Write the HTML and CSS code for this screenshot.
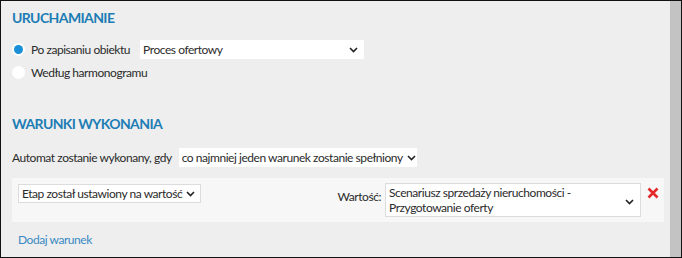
FILE: index.html
```html
<!DOCTYPE html>
<html>
    <head>
        <title>Automat</title>
        <meta charset="UTF-8">
        <link rel="stylesheet" href="styles.css">
    </head>
    <body>
        <div class="frame">
            <div class="content">
                <h2 class="section-title">URUCHAMIANIE</h2>

                <div class="radio-row">
                    <span class="radio checked"></span>
                    <span class="radio-label">Po zapisaniu obiektu</span>
                    <div class="dropdown trigger-select">
                        <span class="dropdown-text">Proces ofertowy</span>
                        <svg class="chevron" width="9" height="6" viewBox="0 0 9 6"><path d="M1 1 L4.5 4.5 L8 1" fill="none" stroke="#222" stroke-width="1.6"/></svg>
                    </div>
                </div>
                <div class="radio-row">
                    <span class="radio"></span>
                    <span class="radio-label">Według harmonogramu</span>
                </div>

                <h2 class="section-title second">WARUNKI WYKONANIA</h2>

                <div class="mode-row">
                    <span class="mode-label">Automat zostanie wykonany, gdy</span>
                    <div class="dropdown mode-select">
                        <span class="dropdown-text">co najmniej jeden warunek zostanie spełniony</span>
                        <svg class="chevron" width="9" height="6" viewBox="0 0 9 6"><path d="M1 1 L4.5 4.5 L8 1" fill="none" stroke="#222" stroke-width="1.6"/></svg>
                    </div>
                </div>

                <div class="condition">
                    <div class="dropdown bordered field-select">
                        <span class="dropdown-text">Etap został ustawiony na wartość</span>
                        <svg class="chevron" width="9" height="6" viewBox="0 0 9 6"><path d="M1 1 L4.5 4.5 L8 1" fill="none" stroke="#222" stroke-width="1.6"/></svg>
                    </div>
                    <span class="value-label">Wartość:</span>
                    <div class="dropdown bordered value-select">
                        <span class="dropdown-text">Scenariusz sprzedaży nieruchomości - Przygotowanie oferty</span>
                        <svg class="chevron" width="9" height="6" viewBox="0 0 9 6"><path d="M1 1 L4.5 4.5 L8 1" fill="none" stroke="#222" stroke-width="1.6"/></svg>
                    </div>
                    <svg class="remove" width="12" height="12" viewBox="0 0 12 12"><path d="M1.5 1.5 L10.5 10.5 M10.5 1.5 L1.5 10.5" stroke="#e5292b" stroke-width="2.6"/></svg>
                </div>

                <a class="add-link" href="#">Dodaj warunek</a>
            </div>
            <div class="scrollbar"></div>
        </div>
    </body>
</html>
```

FILE: styles.css
```css
body {
    margin: 0;
    font-family: Lato, "Liberation Sans", sans-serif;
    font-size: 12px;
    letter-spacing: -0.45px;
    line-height: 16px;
    color: #2b2b2b;
}
.frame {
    width: 680px;
    height: 256px;
    border: 1px solid #111;
    display: flex;
    background: #eeeeee;
}
.content {
    flex: 1;
    padding: 9px 0 0 11px;
}
.scrollbar {
    width: 11px;
    background: #c3c3c3;
}
.section-title {
    margin: 0;
    font-size: 14px;
    letter-spacing: -0.6px;
    font-weight: bold;
    color: #1c7db5;
    line-height: 16px;
}
.section-title.second {
    margin-top: 32px;
}
.radio-row {
    display: flex;
    align-items: center;
    height: 23px;
}
.radio-row:first-of-type {
    margin-top: 12px;
}
.radio {
    width: 13px;
    height: 13px;
    border-radius: 50%;
    background: white;
    margin: 0 6px 0 0;
    display: flex;
    align-items: center;
    justify-content: center;
}
.radio.checked::after {
    content: "";
    width: 9px;
    height: 9px;
    border-radius: 50%;
    background: #1a8fd8;
}
.radio-label {
    margin-right: 10px;
}
.dropdown {
    display: flex;
    align-items: center;
    background: white;
    box-sizing: border-box;
    padding: 0 6px 0 3px;
}
.dropdown-text {
    flex: 1;
    white-space: nowrap;
}
.chevron {
    flex: none;
    margin-left: 4px;
}
.trigger-select {
    width: 224px;
    height: 19px;
}
.mode-row {
    display: flex;
    align-items: center;
    margin-top: 16px;
}
.mode-label {
    margin-right: 7px;
}
.mode-select {
    width: 238px;
    height: 19px;
}
.bordered {
    border: 1px solid #dcdcdc;
}
.condition {
    display: flex;
    align-items: flex-start;
    background: #f7f7f7;
    width: 652px;
    height: 44px;
    box-sizing: border-box;
    margin-top: 11px;
    padding: 5px 0 0 6px;
}
.field-select {
    width: 183px;
    height: 19px;
    margin-top: 1px;
}
.value-label {
    margin-left: auto;
    margin-top: 6px;
    margin-right: 4px;
}
.value-select {
    width: 256px;
    height: 34px;
    align-items: flex-start;
    padding-top: 1px;
}
.value-select .dropdown-text {
    white-space: normal;
    line-height: 15px;
}
.value-select .chevron {
    margin-top: 14px;
}
.remove {
    margin: 4px 5px 0 6px;
}
.add-link {
    display: inline-block;
    margin: 10px 0 0 6px;
    color: #3a8ac4;
    text-decoration: none;
}
```
